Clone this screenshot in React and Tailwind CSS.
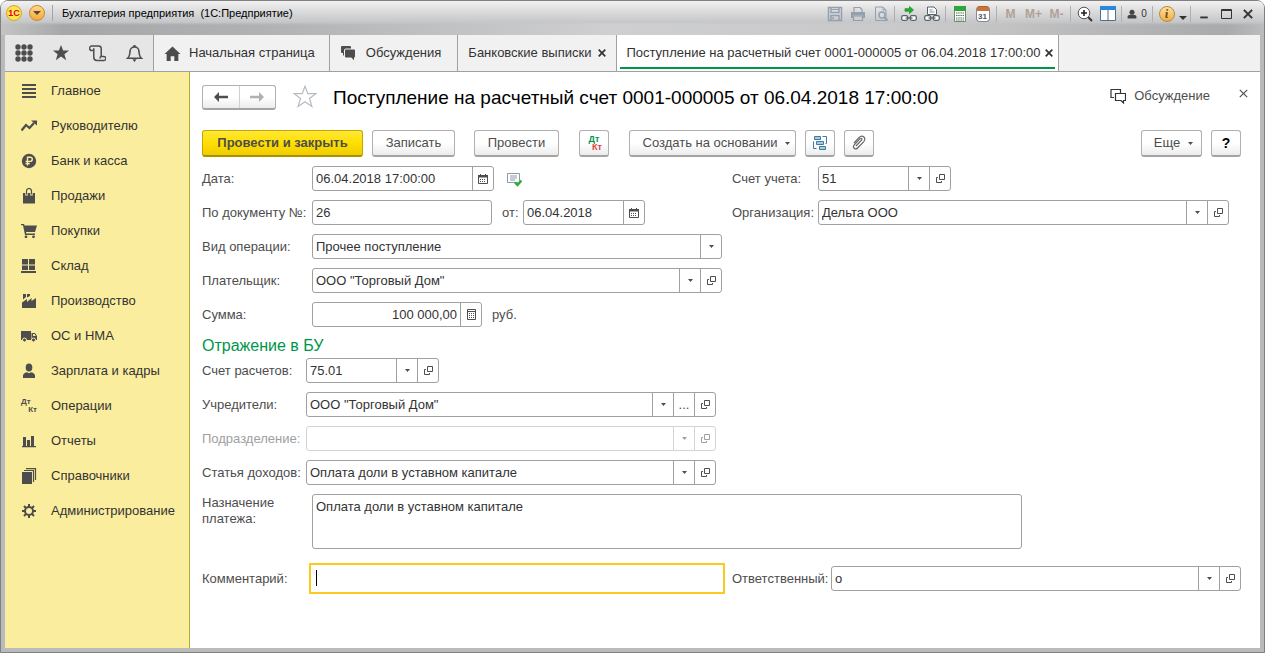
import clsx from 'clsx';

const Svg = ({ size = 16, className, children }) => (
    <svg width={size} height={size} viewBox="0 0 16 16" fill="currentColor" className={clsx('shrink-0', className)} aria-hidden="true">
        {children}
    </svg>
);

const STAR = 'M8 .8l1.9 5h5.3L11 9l1.6 5.4L8 11.2l-4.6 3.2L5 9 .8 5.8h5.3z';

/* ---------- small shared glyphs ---------- */

const Arrow = () => (
    <svg width="5" height="3" viewBox="0 0 5 3" fill="currentColor" className="shrink-0" aria-hidden="true">
        <path d="M0 0h5L2.500 3z" />
    </svg>
);

const Cross = ({ size = 8, width = 1.7 }) => (
    <svg width={size} height={size} viewBox="0 0 8 8" fill="none" stroke="currentColor" strokeWidth={width} className="shrink-0" aria-hidden="true">
        <path d="M.7.7l6.6 6.6M7.3.7L.7 7.3" />
    </svg>
);

const OpenGlyph = () => (
    <svg width="9" height="9" viewBox="0 0 9 9" fill="none" stroke="currentColor" className="shrink-0" aria-hidden="true">
        <path d="M3.5.5h5v5h-5zM2 3.5H.5v5h5V7" />
    </svg>
);

const CalendarGlyph = () => (
    <svg width="10" height="10" viewBox="0 0 10 10" className="shrink-0" aria-hidden="true">
        <path d="M.5 1.5h9v8h-9z" fill="none" stroke="currentColor" />
        <path d="M0 1h10v2.500H0zM2 0h1v1H2zM7 0h1v1H7z" fill="currentColor" />
        <path d="M2 5h1v1H2zm2 0h1v1H4zm2 0h1v1H6zM2 7h1v1H2zm2 0h1v1H4zm2 0h1v1H6z" fill="currentColor" />
    </svg>
);

const CalcGlyph = () => (
    <svg width="9" height="11" viewBox="0 0 9 11" className="shrink-0" aria-hidden="true">
        <path d="M.5.5h8v10h-8zM0 2.5h9" fill="none" stroke="currentColor" />
        <path d="M2 4h1v1H2zm2 0h1v1H4zm2 0h1v1H6zM2 6h1v1H2zm2 0h1v1H4zm2 0h1v1H6zM2 8h1v1H2zm2 0h1v1H4zm2 0h1v1H6z" fill="currentColor" />
    </svg>
);

const DtKt = ({ colored }) => (
    <span className={clsx('flex w-4 shrink-0 flex-col font-bold', colored ? 'text-[9px] leading-[8px]' : 'text-[8px] leading-[8px]')} aria-hidden="true">
        <span className={clsx(colored && 'text-[#009646]')}>Дт</span>
        <span className={clsx('self-end', colored && 'text-[#e0403c]')}>Кт</span>
    </span>
);

/* ---------- sidebar ---------- */

const sections = [
    { title: 'Главное', icon: <Svg><path d="M1 1h14v2H1zm0 4h14v2H1zm0 4h14v2H1zm0 4h14v2H1z" /></Svg> },
    {
        title: 'Руководителю',
        icon: <Svg><path d="M.5 12.5L5 7l3.500 3L13 5" fill="none" stroke="currentColor" strokeWidth="2.200" /><path d="M10 2.500h6v5z" /></Svg>,
    },
    {
        title: 'Банк и касса',
        icon: (
            <Svg>
                <circle cx="8" cy="8" r="7.200" />
                <path d="M6.500 12.500V4.200h2.700a2.100 2.100 0 010 4.200H4.600M4.600 10.500h4.200" fill="none" stroke="#fbed9e" strokeWidth="1.400" />
            </Svg>
        ),
    },
    {
        title: 'Продажи',
        icon: <Svg><path d="M2 5h12v10.500H2z" /><path d="M5.500 7.500V3.200a2.500 2.500 0 015 0v4.300" fill="none" stroke="#fbed9e" strokeWidth="2.500" /><path d="M5.500 6.500V3a2.500 2.500 0 015 0v3.500" fill="none" stroke="currentColor" strokeWidth="1.200" /></Svg>,
    },
    {
        title: 'Покупки',
        icon: <Svg><path d="M0 1h3l.5 1.500H16L14 9H5l.3 1.500H14V12H4L2 2.300H0z" /><circle cx="5" cy="13.800" r="1.400" /><circle cx="12.500" cy="13.800" r="1.400" /></Svg>,
    },
    { title: 'Склад', icon: <Svg><path d="M1 1h6v5.500H1zm7 0h6v5.500H8zM1 7.500h6V12H1zm7 0h6V12H8zM0 13h15v2H0z" /></Svg> },
    { title: 'Производство', icon: <Svg><path d="M1 15V9.500L6 6v3l4.500-4v3L15 5v10zM2 1h3v3L2 6.500zM6 1h3v2L6 4.500z" /></Svg> },
    {
        title: 'ОС и НМА',
        icon: (
            <Svg>
                <path d="M0 3h10v9H0zM10.500 5H14l2 3v4h-5.500z" />
                <path d="M12 6h1.600l1.200 2H12z" fill="#fbed9e" />
                <g stroke="#fbed9e"><circle cx="3.500" cy="12" r="2" /><circle cx="12.500" cy="12" r="2" /></g>
            </Svg>
        ),
    },
    { title: 'Зарплата и кадры', icon: <Svg><ellipse cx="8" cy="4.500" rx="3.300" ry="4" /><path d="M2 15v-2.500C2 10.500 4.500 9.500 6 9.200l2 1 2-1c1.500.3 4 1.300 4 3.300V15z" /></Svg> },
    { title: 'Операции', icon: <DtKt /> },
    { title: 'Отчеты', icon: <Svg><path d="M2 4h3v9H2zm4 3h3v6H6zm4-4h3v10h-3zM1 13h14v1.200H1z" /></Svg> },
    {
        title: 'Справочники',
        icon: <Svg><path d="M1 4h10v12H1z" /><path d="M3 2.500h9.500V14M5 .6h9.500V12" fill="none" stroke="currentColor" strokeWidth="1.200" /></Svg>,
    },
    {
        title: 'Администрирование',
        icon: (
            <Svg>
                <circle cx="8" cy="8" r="4" fill="none" stroke="currentColor" strokeWidth="2" />
                <path d="M8 1v3M8 12v3M1 8h3M12 8h3M3 3l2.200 2.200M10.800 10.800L13 13M13 3l-2.200 2.200M5.200 10.800L3 13" stroke="currentColor" strokeWidth="2" />
            </Svg>
        ),
    },
];

const Sidebar = () => (
    <nav className="w-[185px] shrink-0 border-r border-[#b9a92e] bg-[#fbed9e] pt-px">
        {sections.map(({ title, icon }) => (
            <a key={title} href="#" className="flex h-[35px] items-center gap-[14px] pl-4 whitespace-nowrap text-[#333]">
                <span className="text-[#4d4d4d]">{icon}</span>
                {title}
            </a>
        ))}
    </nav>
);

/* ---------- title bar ---------- */

const ToolButton = ({ label, width = 'w-[23px]', className, children }) => (
    <button type="button" aria-label={label} className={clsx('flex h-5 shrink-0 items-center justify-center', width, className)}>
        {children}
    </button>
);

const Divider = () => <span className="mx-[2px] h-4 w-px shrink-0 bg-[#b0b0b0]" />;

const TitleBar = () => (
    <header className="flex h-[34px] items-start rounded-t-md bg-[linear-gradient(to_bottom,#f2f2f2_0,#dcdcdd_10px,#c6c7c9_21px,transparent_24px),linear-gradient(to_right,#c4c4c4_0,#a6a7a9_5%,#b0b1b3_20%,#cfcfcf_48%,#c8c8c8_75%,#a9aaac_97%,#bcbcbc_100%)] pt-[2px] pr-[5px] pl-[5px] text-[11px]">
        <div className="flex h-5 items-center gap-[7px]">
            <span className="flex size-4 items-center justify-center rounded-full border border-[#d8a82c] bg-[radial-gradient(#fff36b,#fbd634)] text-[9px] leading-3 font-bold text-[#e3000f]">1С</span>
            <button type="button" aria-label="Меню" className="flex size-4 items-center justify-center rounded-full border border-[#c88a2a] bg-[linear-gradient(#ffd88a,#f5a93c)] text-[#5a4a32]">
                <svg width="8" height="4" viewBox="0 0 8 4" fill="currentColor" aria-hidden="true"><path d="M0 0h8L4 4z" /></svg>
            </button>
            <span className="mr-[2px] h-4 w-px bg-[#a5a5a5]" />
            <span className="whitespace-pre text-black">Бухгалтерия предприятия  (1С:Предприятие)</span>
        </div>

        <div className="ml-auto flex h-[22px] items-center">
            <ToolButton label="Сохранить" className="text-[#93a0ae]">
                <Svg><path d="M1.500 1.500h13v13h-13zM4 1.500v5h8v-5M4 14.500v-5h8v5M6 11v2" fill="none" stroke="currentColor" strokeWidth="1.500" /><path d="M4.500 3.500h7" stroke="currentColor" /></Svg>
            </ToolButton>
            <ToolButton label="Печать" className="text-[#93a0ae]">
                <Svg><path d="M1 6h14v6h-2V9.500H3V12H1z" /><path d="M4 6V1.500h6l2 2V6M3.500 10h9v4.500h-9z" fill="none" stroke="currentColor" strokeWidth="1.200" /></Svg>
            </ToolButton>
            <ToolButton label="Предварительный просмотр" className="text-[#93a0ae]">
                <Svg><path d="M2.500 1h7.500l3 3v10.500H2.500zM10 1v3h3" fill="none" stroke="currentColor" /><circle cx="9" cy="9" r="3" fill="#d5dde4" stroke="currentColor" strokeWidth="1.500" /><path d="M11.500 11.500l3 3" stroke="currentColor" strokeWidth="2" /></Svg>
            </ToolButton>
            <Divider />
            <ToolButton label="Перейти по ссылке">
                <Svg>
                    <path d="M4 2.700h4.500V.5L12.500 4 8.500 7.500V5.300H4z" fill="#1eb32a" stroke="#117a1b" strokeWidth=".6" />
                    <rect x=".7" y="9.700" width="6" height="4.600" rx="1.500" fill="#fff" stroke="#59626c" strokeWidth="1.300" />
                    <rect x="9.300" y="9.700" width="6" height="4.600" rx="1.500" fill="#fff" stroke="#59626c" strokeWidth="1.300" />
                    <path d="M4.500 12h7" stroke="#59626c" strokeWidth="1.300" />
                </Svg>
            </ToolButton>
            <ToolButton label="Получить ссылку">
                <Svg>
                    <path d="M3.500 8.500V1h6.500l2.500 2.500v5z" fill="#fff" stroke="#59626c" /><path d="M5.500 4h3M5.500 6h5" stroke="#8291a0" />
                    <rect x=".7" y="9.700" width="6" height="4.600" rx="1.500" fill="#fff" stroke="#59626c" strokeWidth="1.300" />
                    <rect x="9.300" y="9.700" width="6" height="4.600" rx="1.500" fill="#fff" stroke="#59626c" strokeWidth="1.300" />
                    <path d="M4.500 12h7" stroke="#59626c" strokeWidth="1.300" />
                </Svg>
            </ToolButton>
            <Divider />
            <ToolButton label="Калькулятор">
                <Svg>
                    <path d="M2.500.5h11v15h-11z" fill="#fff" stroke="#6f8a72" /><path d="M2 0h12v5H2z" fill="#2fa63b" />
                    <path d="M4 7h8M4 9.500h8M4 12h8M4 14h8" stroke="#55705a" strokeWidth="1.200" strokeDasharray="1.500 .7" />
                </Svg>
            </ToolButton>
            <ToolButton label="Календарь">
                <span className="flex h-4 w-[14px] flex-col items-center rounded-sm border border-[#8a8a8a] border-t-[#b3622e] bg-white text-[8px] leading-[9px] font-bold text-[#4d5862]">
                    <span className="mb-px h-1 w-full shrink-0 bg-[#c9733a]" />
                    31
                </span>
            </ToolButton>
            <Divider />
            <ToolButton label="Память" className="text-xs font-bold text-[#b0a198]">M</ToolButton>
            <ToolButton label="Прибавить к памяти" className="text-xs font-bold text-[#b0a198]">M+</ToolButton>
            <ToolButton label="Вычесть из памяти" className="text-xs font-bold text-[#b0a198]">M-</ToolButton>
            <Divider />
            <ToolButton label="Масштаб">
                <Svg><circle cx="7" cy="7" r="5.800" fill="#fff" stroke="#555" /><path d="M4 7h6M7 4v6" stroke="#222" strokeWidth="1.600" /><path d="M11.300 11.300l3.700 3.700" stroke="#333" strokeWidth="2" /></Svg>
            </ToolButton>
            <ToolButton label="Панели">
                <Svg><path d="M.5.5h15v14H.5z" fill="#fff" stroke="#4d6f8c" /><path d="M0 0h16v4H0z" fill="#2b87d8" /><path d="M8 4v11" stroke="#4d6f8c" /></Svg>
            </ToolButton>
            <Divider />
            <button type="button" aria-label="Пользователи" className="flex h-5 w-[26px] items-center justify-center gap-1 text-[10px] text-[#333]">
                <Svg size={10}><circle cx="8" cy="5" r="4" fill="#444" /><path d="M1 15v-3c0-3 5-3 7-3s7 0 7 3v3z" fill="#444" /></Svg>
                0
            </button>
            <Divider />
            <ToolButton label="Информация">
                <span className="flex size-4 items-center justify-center rounded-full border border-[#b98939] bg-[linear-gradient(#ffe09a,#f2ae49)] font-serif text-xs leading-3 font-bold text-[#6b4a18] italic">i</span>
            </ToolButton>
            <button type="button" aria-label="Еще команды" className="flex h-5 w-[10px] items-end justify-center pb-1 text-[#333]">
                <svg width="8" height="4" viewBox="0 0 8 4" fill="currentColor" className="shrink-0" aria-hidden="true"><path d="M0 0h8L4 4z" /></svg>
            </button>
            <Divider />
            <ToolButton label="Свернуть" width="w-[22px]" className="text-[#333]"><Svg size={10}><path d="M2 12h12v3H2z" /></Svg></ToolButton>
            <ToolButton label="Развернуть" width="w-[22px]" className="text-[#333]">
                <svg width="11" height="10" viewBox="0 0 11 10" aria-hidden="true"><path d="M.5.5h10v9H.5zM0 1.500h11" fill="none" stroke="currentColor" /></svg>
            </ToolButton>
            <ToolButton label="Закрыть" width="w-[22px]" className="text-[#333]"><Cross size={10} width={1.6} /></ToolButton>
        </div>
    </header>
);

/* ---------- tabs ---------- */

const TabBar = () => (
    <div className="flex h-[37px] border-b border-[#a0a0a0] bg-[#f1f1f1] whitespace-nowrap text-[#333]">
        <div className="flex border-r border-[#a0a0a0] bg-[#e6e6e6] text-[#4d4d4d]">
            <button type="button" aria-label="Разделы" className="flex w-[37px] items-center justify-center">
                <svg width="18" height="18" viewBox="0 0 18 18" fill="currentColor" aria-hidden="true">
                    {[3, 9, 15].map((y) => [3, 9, 15].map((x) => <circle key={`${x}-${y}`} cx={x} cy={y} r="2.700" />))}
                </svg>
            </button>
            <button type="button" aria-label="Избранное" className="flex w-[37px] items-center justify-center">
                <Svg size={18}><path d={STAR} /></Svg>
            </button>
            <button type="button" aria-label="История" className="flex w-[37px] items-center justify-center">
                <Svg size={17}><path d="M4.500 5.200H2.600a2 2 0 110-4.200H9q2.500 0 2.500 2.500v7.300M4.500 3v8.500q0 3 3 3h6a1.900 1.900 0 100-3.700h-2q-1.200 0-1.200 1.800" fill="none" stroke="currentColor" strokeWidth="1.400" /></Svg>
            </button>
            <button type="button" aria-label="Оповещения" className="flex w-[37px] items-center justify-center">
                <Svg size={17}><path d="M1.500 12.500C4 10.500 3.500 8 3.800 6a4.200 4.200 0 018.400 0c.3 2-.2 4.500 2.300 6.500z" fill="none" stroke="currentColor" strokeWidth="1.500" /><path d="M7 0h2v2H7zM6 13.500h4L8 16z" /></Svg>
            </button>
        </div>
        <a href="#" className="flex items-center gap-2 border-r border-[#a0a0a0] pr-[14px] pl-[10px]">
            <Svg size={17} className="text-[#4d4d4d]"><path d="M8 1.500l7.500 7h-2V15H9.700v-4.500H6.300V15H2.500V8.500h-2z" /></Svg>
            Начальная страница
        </a>
        <a href="#" className="flex items-center gap-[10px] border-r border-[#a0a0a0] pr-4 pl-[10px]">
            <Svg className="text-[#4d4d4d]"><path d="M2 1h8q1 0 1 1v1.500H6Q4 3.500 4 5.500V10L3 11V8H2Q1 8 1 7V2q0-1 1-1z" /><path d="M6 4.500h8q1 0 1 1v6q0 1-1 1v2.700L11.300 12.500H6q-1 0-1-1v-6q0-1 1-1z" /></Svg>
            Обсуждения
        </a>
        <div className="flex items-center gap-[7px] border-r border-[#a0a0a0] px-[10px]">
            <a href="#">Банковские выписки</a>
            <button type="button" aria-label="Закрыть вкладку"><Cross /></button>
        </div>
        <div className="flex border-r border-[#a0a0a0] bg-white px-[3px] pb-[2px]">
            <div className="flex items-center gap-1 border-b-2 border-[#00964a] pt-1 pr-[2px] pl-[6px]">
                <a href="#">Поступление на расчетный счет 0001-000005 от 06.04.2018 17:00:00</a>
                <button type="button" aria-label="Закрыть вкладку"><Cross /></button>
            </div>
        </div>
    </div>
);

/* ---------- form parts ---------- */

const Button = ({ primary, className, children, ...rest }) => (
    <button
        type="button"
        className={clsx(
            'flex h-[27px] shrink-0 items-center justify-center rounded-[3px] border border-b-2 whitespace-nowrap text-[#4d4d4d]',
            primary
                ? 'border-[#c4a600] border-b-[#a89000] bg-[linear-gradient(#ffe838,#ffdf00_50%,#f0cd00)] font-bold'
                : 'border-[#b0b0b0] border-b-[#a3a3a3] bg-[linear-gradient(#fff_50%,#ececec)]',
            className,
        )}
        {...rest}
    >
        {children}
    </button>
);

const Cell = ({ label, disabled, children }) => (
    <button
        type="button"
        aria-label={label}
        disabled={disabled}
        className="flex w-[21px] shrink-0 items-center justify-center border-l border-inherit"
    >
        {children}
    </button>
);

// Frame shared by every one-line field
const Box = ({ className, disabled, children }) => (
    <div className={clsx('flex h-[25px] rounded-[3px] border bg-white', disabled ? 'border-[#d4d4d4] text-[#a0a0a0]' : 'border-[#a0a0a0] text-[#4d4d4d]', className)}>
        {children}
    </div>
);

const TextField = ({ id, className, inputClass, value, children }) => (
    <Box className={className}>
        <input id={id} type="text" defaultValue={value} className={clsx('w-0 min-w-0 flex-1 bg-transparent px-[3px] text-[#333] outline-none', inputClass)} />
        {children}
    </Box>
);

const SelectField = ({ id, className, value, disabled, more, open = true }) => (
    <Box className={className} disabled={disabled}>
        <div className="relative min-w-0 flex-1 border-inherit">
            <select id={id} disabled={disabled} defaultValue={value} className="block h-full w-full appearance-none bg-transparent pr-[21px] pl-[3px] text-[#333] outline-none">
                <option>{value}</option>
            </select>
            <span className="pointer-events-none absolute inset-y-0 right-0 flex w-[21px] items-center justify-center border-l border-inherit">
                <Arrow />
            </span>
        </div>
        {more && <Cell label="Выбрать">...</Cell>}
        {open && <Cell label="Открыть" disabled={disabled}><OpenGlyph /></Cell>}
    </Box>
);

const Row = ({ id, label, labelClass = 'w-[110px]', disabled, children }) => (
    <div className="flex h-[25px] items-center">
        <label htmlFor={id} className={clsx('shrink-0 whitespace-nowrap', labelClass, disabled && 'text-[#a0a0a0]')}>{label}</label>
        {children}
    </div>
);

const FormHeader = () => (
    <div className="flex h-[50px] items-center px-3">
        <div className="flex h-[25px] w-[74px] shrink-0 rounded-[3px] border border-[#b0b0b0] border-b-2 border-b-[#a3a3a3] bg-[linear-gradient(#fff_50%,#ececec)]">
            <button type="button" aria-label="Назад" className="flex flex-1 items-center justify-center text-[#4d4d4d]">
                <Svg><path d="M1 8l5-5v3.800h9v2.400H6V13z" /></Svg>
            </button>
            <button type="button" aria-label="Вперед" className="flex flex-1 items-center justify-center border-l border-[#d0d0d0] text-[#b0b0b0]">
                <Svg><path d="M15 8l-5-5v3.800H1v2.400h9V13z" /></Svg>
            </button>
        </div>
        <button type="button" aria-label="В избранное" className="mr-4 ml-[17px] text-[#b5bcc4]">
            <Svg size={24}><path d={STAR} fill="none" stroke="currentColor" strokeWidth=".8" /></Svg>
        </button>
        <h1 className="pt-[2px] text-[19px] whitespace-nowrap text-black">Поступление на расчетный счет 0001-000005 от 06.04.2018 17:00:00</h1>
        <a href="#" className="mr-7 mb-[2px] ml-auto flex items-center gap-2">
            <Svg className="text-[#333]"><path d="M4 9.500H1v-8h9.500V5M5.500 5.500h10v7h-2V15L11 12.500H5.500z" fill="none" stroke="currentColor" strokeWidth="1.200" /></Svg>
            Обсуждение
        </a>
        <button type="button" aria-label="Закрыть" className="mb-2 flex w-[10px] justify-center"><Cross size={9} width={1} /></button>
    </div>
);

const CommandBar = () => (
    <div className="flex gap-[9px] pt-2 pr-[19px] pl-3">
        <Button primary className="w-[161px]">Провести и закрыть</Button>
        <Button className="mr-[10px] w-[83px]">Записать</Button>
        <Button className="mr-[11px] w-[85px]">Провести</Button>
        <Button className="mr-[11px] w-[30px]" aria-label="Показать проводки"><DtKt colored /></Button>
        <Button className="w-[167px] gap-2 pl-2">Создать на основании <Arrow /></Button>
        <Button className="w-[30px]" aria-label="Структура подчиненности">
            <Svg>
                <g fill="#a9cbe0" stroke="#3f7ba3"><path d="M2.500 1.500h6v3h-6zM4.500 6.500h7v3h-7zM7.500 11.500h6v3h-6z" /></g>
                <path d="M10.500 1.500h4v7h-1M1.500 6.500v7h3" fill="none" stroke="#3f7ba3" />
            </Svg>
        </Button>
        <Button className="w-[30px]" aria-label="Присоединенные файлы">
            <Svg><path d="M5 11l5.500-5.800c1.300-1.200-.2-2.700-1.400-1.500L3.300 9.800c-2.400 2.600 1 5.600 3.300 3.200l6-6.200c3.500-3.800-1.300-7.600-4.600-4.200L3 8" fill="none" stroke="#666" strokeWidth="1.200" /></Svg>
        </Button>
        <Button className="ml-auto w-[61px] gap-2 pl-1">Еще <Arrow /></Button>
        <Button className="w-[30px] text-sm font-bold"><span className="text-black">?</span></Button>
    </div>
);

const Form = () => (
    <form className="pt-[9px] pr-[19px] pl-3" onSubmit={(e) => e.preventDefault()}>
        <div className="flex gap-[10px]">
            <div className="flex w-[520px] shrink-0 flex-col gap-[9px]">
                <Row id="date" label="Дата:">
                    <TextField id="date" className="w-[182px]" value="06.04.2018 17:00:00">
                        <Cell label="Выбрать дату"><CalendarGlyph /></Cell>
                    </TextField>
                    <Svg className="ml-3">
                        <path d="M1.500 2.500h12v9h-12z" fill="#fff" stroke="#8b9aa8" /><path d="M4 5h7M4 7h7M4 9h5" stroke="#8b9aa8" />
                        <path d="M9 11.500l2.500 2.500L15.500 9.500" fill="none" stroke="#2fae3d" strokeWidth="2.400" />
                    </Svg>
                </Row>
                <Row id="docNumber" label="По документу №:">
                    <TextField id="docNumber" className="w-[180px]" value="26" />
                    <label htmlFor="docDate" className="ml-[10px] w-[21px]">от:</label>
                    <TextField id="docDate" className="w-[122px]" value="06.04.2018">
                        <Cell label="Выбрать дату"><CalendarGlyph /></Cell>
                    </TextField>
                </Row>
                <Row id="operation" label="Вид операции:">
                    <SelectField id="operation" className="flex-1" value="Прочее поступление" open={false} />
                </Row>
                <Row id="payer" label="Плательщик:">
                    <SelectField id="payer" className="flex-1" value={'ООО "Торговый Дом"'} />
                </Row>
                <Row id="amount" label="Сумма:">
                    <TextField id="amount" className="w-[170px]" inputClass="text-right" value="100 000,00">
                        <Cell label="Калькулятор"><CalcGlyph /></Cell>
                    </TextField>
                    <span className="ml-[10px]">руб.</span>
                </Row>
            </div>
            <div className="mr-3 flex min-w-0 flex-1 flex-col gap-[9px]">
                <Row id="account" label="Счет учета:" labelClass="w-[86px]">
                    <SelectField id="account" className="w-[133px]" value="51" />
                </Row>
                <Row id="company" label="Организация:" labelClass="w-[86px]">
                    <SelectField id="company" className="flex-1" value="Дельта ООО" />
                </Row>
            </div>
        </div>

        <h2 className="mt-[9px] mb-[2px] text-base leading-5 text-[#00964a]">Отражение в БУ</h2>

        <div className="flex w-[514px] flex-col gap-[9px]">
            <Row id="settlement" label="Счет расчетов:" labelClass="w-[104px]">
                <SelectField id="settlement" className="w-[133px]" value="75.01" />
            </Row>
            <Row id="founders" label="Учредители:" labelClass="w-[104px]">
                <SelectField id="founders" className="flex-1" value={'ООО "Торговый Дом"'} more />
            </Row>
            <Row id="department" label="Подразделение:" labelClass="w-[104px]" disabled>
                <SelectField id="department" className="flex-1" value="" disabled />
            </Row>
            <Row id="income" label="Статья доходов:" labelClass="w-[104px]">
                <SelectField id="income" className="flex-1" value="Оплата доли в уставном капитале" />
            </Row>
        </div>

        <div className="mt-[9px] flex">
            <label htmlFor="purpose" className="w-[110px] shrink-0 pt-px pr-4 leading-4">Назначение платежа:</label>
            <textarea id="purpose" defaultValue="Оплата доли в уставном капитале" className="h-[55px] w-[710px] resize-none rounded-[3px] border border-[#a0a0a0] px-[3px] py-1 leading-4 text-[#333] outline-none" />
        </div>

        <div className="mt-[14px] flex items-center">
            <label htmlFor="comment" className="w-[107px] shrink-0">Комментарий:</label>
            <div className="relative mr-[7px] w-[416px] shrink-0">
                <input id="comment" type="text" className="block h-[31px] w-full border-2 border-[#fbca1c] px-[5px] text-[#333] outline-none" />
                <span className="absolute top-[7px] left-[7px] h-4 w-px bg-black" />
            </div>
            <label htmlFor="responsible" className="w-[99px] shrink-0">Ответственный:</label>
            <SelectField id="responsible" className="flex-1" value="о" />
        </div>
    </form>
);

const App = () => {
    return (
        <div className="flex min-h-screen flex-col rounded-t-lg border border-[#808080] bg-[#b9babc] font-['Liberation_Sans',Arial,sans-serif] text-[13px] leading-4 text-[#4d4d4d]">
            <TitleBar />
            <div className="mx-1 mb-1 flex flex-1 flex-col bg-white">
                <TabBar />
                <div className="flex flex-1">
                    <Sidebar />
                    <main className="min-w-0 flex-1">
                        <FormHeader />
                        <CommandBar />
                        <Form />
                    </main>
                </div>
            </div>
        </div>
    );
};

export default App;
